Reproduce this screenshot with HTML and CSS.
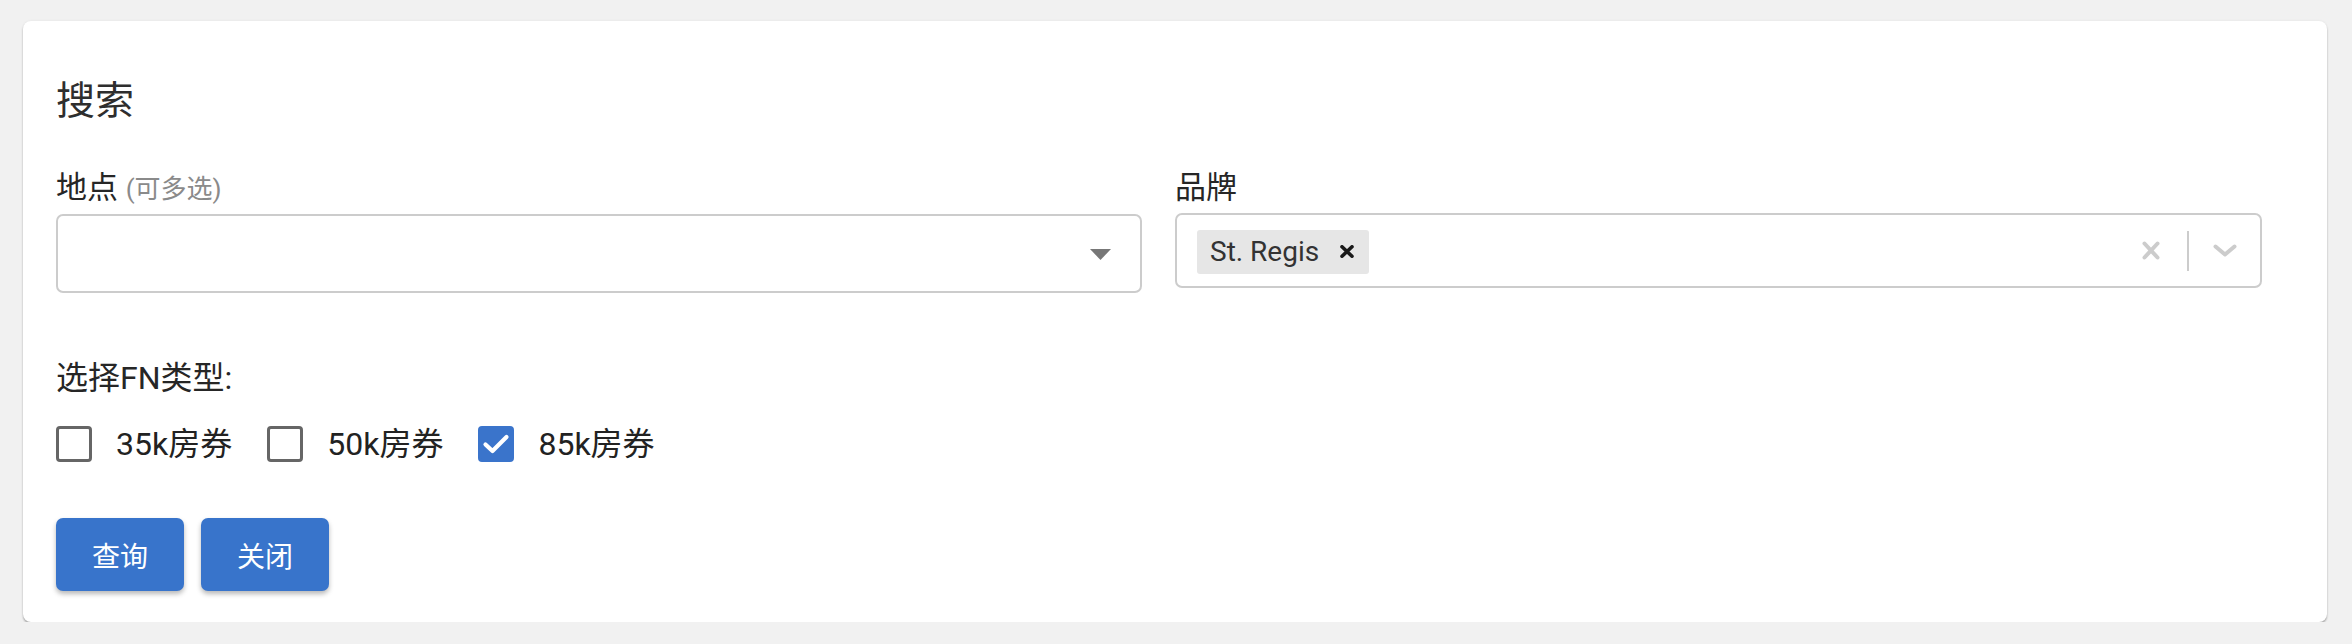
FILE: index.html
```html
<!DOCTYPE html>
<html lang="zh-CN">
<head>
<meta charset="utf-8">
<title>搜索</title>
<link rel="stylesheet" href="styles.css">
</head>
<body>
<div class="card">
  <div class="title">搜索</div>
  <div class="fields">
    <div class="field">
      <div class="label">地点 <span class="hint">(可多选)</span></div>
      <div class="select select-native">
        <svg class="caret" width="21" height="11" viewBox="0 0 21 11"><path d="M0 0 H21 L10.5 11 Z" fill="#777"/></svg>
      </div>
    </div>
    <div class="field">
      <div class="label">品牌</div>
      <div class="select select-multi">
        <div class="values">
          <span class="tag">St. Regis
            <svg class="tag-x" width="14" height="13" viewBox="0 0 14 13"><path d="M2 1.8 L12 11.2 M12 1.8 L2 11.2" stroke="#1a1a1a" stroke-width="3.6" stroke-linecap="round"/></svg>
          </span>
        </div>
        <div class="indicators">
          <svg class="clear" width="18" height="19" viewBox="0 0 18 19"><path d="M2.5 2.5 L15.5 16.5 M15.5 2.5 L2.5 16.5" stroke="#cccccc" stroke-width="4" stroke-linecap="round"/></svg>
          <span class="sep"></span>
          <svg class="chev" width="24" height="13" viewBox="0 0 24 13"><path d="M2.5 2.5 L12 10.5 L21.5 2.5" stroke="#cccccc" stroke-width="4" fill="none" stroke-linecap="round" stroke-linejoin="round"/></svg>
        </div>
      </div>
    </div>
  </div>
  <div class="fn-label">选择FN类型:</div>
  <div class="checks">
    <label class="check"><span class="box"></span><span class="check-text">35k房券</span></label>
    <label class="check"><span class="box"></span><span class="check-text">50k房券</span></label>
    <label class="check"><span class="box box-on"><svg width="28" height="20" viewBox="0 0 28 20"><path d="M3.5 10.5 L10.5 17 L24.5 3" stroke="#fff" stroke-width="4.2" fill="none" stroke-linecap="round" stroke-linejoin="round"/></svg></span><span class="check-text">85k房券</span></label>
  </div>
  <div class="buttons">
    <button class="btn">查询</button>
    <button class="btn">关闭</button>
  </div>
</div>
</body>
</html>
```

FILE: styles.css
```css
* { box-sizing: border-box; }
html, body { margin: 0; }
body {
  background: #f1f1f1;
  padding: 21px 25px 0 23px;
  font-family: Roboto, "Noto Sans CJK SC", sans-serif;
  color: #262626;
}
.card {
  background: #fff;
  border-radius: 8px;
  box-shadow: 0 2px 2px rgba(0,0,0,0.28), 0 0 3px rgba(0,0,0,0.06);
  padding: 56px 65px 32px 33px;
  height: 601px;
}
.title {
  font-size: 39px;
  line-height: 48px;
  color: #2e2e2e;
}
.fields {
  display: grid;
  grid-template-columns: 1086px 1087px;
  column-gap: 33px;
  align-items: start;
  margin-top: 40px;
}
.label {
  font-size: 31px;
  line-height: 46px;
  margin-bottom: 2px;
  white-space: nowrap;
}
.hint {
  font-size: 26px;
  color: #8a8a8a;
}
.select {
  border: 2px solid #cccccc;
  border-radius: 7px;
  display: flex;
  align-items: center;
  background: #fff;
}
.select-native {
  height: 79px;
  justify-content: flex-end;
  padding-right: 29px;
}
.select-native .caret { display: block; margin-top: 2px; }
.select-multi {
  height: 75px;
  padding: 0 23px 0 20px;
  justify-content: space-between;
}
.values { display: flex; align-items: center; }
.tag {
  display: flex;
  align-items: center;
  height: 44px;
  background: #e6e6e6;
  border-radius: 3px;
  padding: 0 15px 0 13px;
  font-size: 28px;
  color: #333;
  margin-top: 2px;
  gap: 21px;
}
.tag-x { display: block; }
.indicators {
  display: flex;
  align-items: center;
}
.clear { display: block; }
.sep {
  display: block;
  width: 2px;
  height: 40px;
  background: #cccccc;
  margin: 0 24px 0 27px;
}
.chev { display: block; }
.fn-label {
  font-size: 32px;
  line-height: 46px;
  margin-top: 62px;
}
.checks {
  display: flex;
  align-items: center;
  gap: 35px;
  margin-top: 20px;
  height: 46px;
}
.check {
  display: flex;
  align-items: center;
  gap: 24px;
}
.box {
  width: 36px;
  height: 36px;
  border: 3px solid #666;
  border-radius: 4px;
  display: flex;
  align-items: center;
  justify-content: center;
}
.box-on {
  background: #3a74cb;
  border-color: #3a74cb;
}
.check-text {
  font-size: 32px;
  line-height: 46px;
  color: #222;
}
.buttons {
  display: flex;
  gap: 17px;
  margin-top: 51px;
}
.btn {
  width: 128px;
  height: 73px;
  border: none;
  border-radius: 7px;
  background: #3874cb;
  color: #fff;
  font-family: Roboto, "Noto Sans CJK SC", sans-serif;
  font-size: 28px;
  box-shadow: 0 3px 5px rgba(0,0,0,0.28);
  padding: 0;
}
```
